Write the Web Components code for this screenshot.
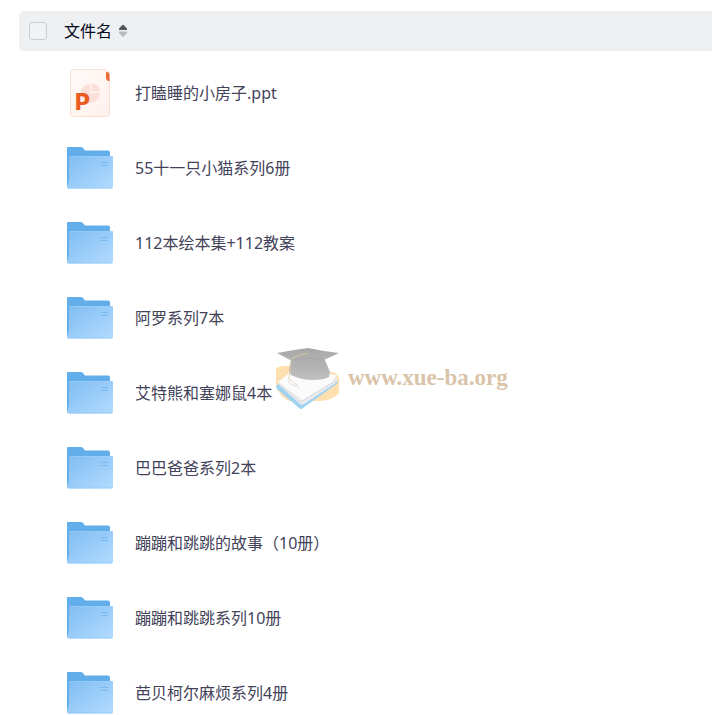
<!DOCTYPE html>
<html lang="zh-CN">
<head>
<meta charset="utf-8">
<meta name="viewport" content="width=device-width, initial-scale=1">
<title>文件名</title>
<style>
  body {
    margin: 0;
    background: #fff;
    font-family: "Noto Sans", "Noto Sans CJK SC", sans-serif;
    font-size: 16px;
    color: #424259;
  }
</style>
</head>
<body>
<file-list>
  <file-header slot="header">文件名</file-header>
  <file-row type="ppt">打瞌睡的小房子.ppt</file-row>
  <file-row>55十一只小猫系列6册</file-row>
  <file-row>112本绘本集+112教案</file-row>
  <file-row>阿罗系列7本</file-row>
  <file-row>艾特熊和塞娜鼠4本</file-row>
  <file-row>巴巴爸爸系列2本</file-row>
  <file-row>蹦蹦和跳跳的故事（10册）</file-row>
  <file-row>蹦蹦和跳跳系列10册</file-row>
  <file-row>芭贝柯尔麻烦系列4册</file-row>
  <site-watermark slot="overlay">www.xue-ba.org</site-watermark>
</file-list>

<script>
const $listTemplate = document.createElement("template");
$listTemplate.innerHTML = `
  <style>
    :host {
      display: block;
      position: relative;
      box-sizing: border-box;
      height: 100vh;
      padding: 11px 0 0 19px;
      overflow: hidden;
    }

    .rows {
      display: flex;
      flex-direction: column;
      padding-top: 4px;
    }
  </style>
  <slot name="header"></slot>
  <div class="rows" role="list"><slot></slot></div>
  <slot name="overlay"></slot>
`;

class FileList extends HTMLElement {
  constructor() {
    super();
    this.attachShadow({ mode: "open" });
    this.shadowRoot.appendChild($listTemplate.content.cloneNode(true));
  }
}

const $headerTemplate = document.createElement("template");
$headerTemplate.innerHTML = `
  <style>
    :host {
      display: flex;
      align-items: center;
      height: 40px;
      padding-left: 10px;
      border-radius: 5px 0 0 5px;
      background: #eff0f2;
      color: #03081a;
    }

    input {
      appearance: none;
      box-sizing: border-box;
      width: 18px;
      height: 18px;
      margin: 0 17px 0 0;
      border: 1px solid #cbccce;
      border-radius: 3px;
      background: #f1f2f4;
    }

    input:checked {
      background: #06a7ff;
    }

    button {
      display: flex;
      align-items: center;
      gap: 6px;
      padding: 0;
      border: 0;
      background: none;
      color: inherit;
      font: inherit;
      line-height: 24px;
      cursor: pointer;
    }
  </style>
  <input type="checkbox" aria-label="全选">
  <button type="button">
    <slot></slot>
    <svg width="10" height="16" viewBox="0 0 10 16" aria-hidden="true">
      <path d="M1 7V5.500L4 2.300Q5 1.300 6 2.300L9 5.500V7Z" fill="#555659"/>
      <path d="M1 8.500V10L4 13.300Q5 14.300 6 13.300L9 10V8.500Z" fill="#b9babd"/>
    </svg>
  </button>
`;

class FileHeader extends HTMLElement {
  constructor() {
    super();
    this.attachShadow({ mode: "open" });
    this.shadowRoot.appendChild($headerTemplate.content.cloneNode(true));
  }
}

const folderIcon = `
  <svg width="48" height="48" viewBox="0 0 48 48" aria-hidden="true">
    <defs>
      <linearGradient id="front" x1="0" y1="0" x2="1" y2="1">
        <stop offset="0" stop-color="#80bdf2"/>
        <stop offset="1" stop-color="#b2dbff"/>
      </linearGradient>
    </defs>
    <path d="M1 4Q1 3 2 3H15Q16 3 17 4L19 6.500H42Q44 6.500 44 8.500V43H2Q1 43 1 42Z" fill="#62aeeb"/>
    <path d="M4 12H46Q47 12 47 13V43Q47 44.500 45.500 44.500H2.500Q1 44.500 1 43L3 36V13Q3 12 4 12Z" fill="url(#front)"/>
    <path d="M4 12.500H46" stroke="#a5d3f9" opacity=".5"/>
    <path d="M2 44H46" stroke="#8fc9fa" opacity=".7"/>
    <path d="M35 18.500H42M35 21.500H42" stroke="#77b9f0"/>
  </svg>
`;

const pptIcon = `
  <svg width="48" height="48" viewBox="0 0 48 48" aria-hidden="true">
    <defs>
      <linearGradient id="sheet" x1="0" y1="0" x2="1" y2="1">
        <stop offset="0" stop-color="#fffaf8"/>
        <stop offset="1" stop-color="#fff1ec"/>
      </linearGradient>
    </defs>
    <path d="M6.500 .5H39L43.500 4V45Q43.500 47.500 41.500 47.500H6.500Q4.500 47.500 4.500 45.500V2.500Q4.500 .5 6.500 .5Z" fill="url(#sheet)" stroke="#fadfd5"/>
    <path d="M24 15V24H33.500A9.500 9.500 0 1 1 24 15Z" fill="#fae0d9"/>
    <path d="M25.500 14A9 9 0 0 1 34 22.500H25.500Z" fill="#fae0d9"/>
    <path d="M40 3H41.500Q43.500 3.500 43.500 6V12H42Q40 11 40 9Z" fill="#ed6a3b"/>
    <text x="9" y="41" font-family="Inter, sans-serif" font-size="23" font-weight="800" fill="#ec5b1e">P</text>
  </svg>
`;

const rowStyle = `
  <style>
    :host {
      display: flex;
      align-items: center;
      gap: 21px;
      height: 75px;
      padding-left: 47px;
    }

    svg {
      display: block;
      flex: none;
    }

    .name {
      line-height: 24px;
      white-space: nowrap;
    }
  </style>
`;

class FileRow extends HTMLElement {
  constructor() {
    super();
    this.attachShadow({ mode: "open" });
  }

  connectedCallback() {
    const icon = this.getAttribute("type") === "ppt" ? pptIcon : folderIcon;
    this.setAttribute("role", "listitem");
    this.shadowRoot.innerHTML = rowStyle + icon + `<span class="name"><slot></slot></span>`;
  }
}

const $watermarkTemplate = document.createElement("template");
$watermarkTemplate.innerHTML = `
  <style>
    /* floats over the rows, never takes clicks */
    :host {
      position: absolute;
      top: 346px;
      left: 275px;
      display: flex;
      align-items: center;
      gap: 8px;
      color: #d9c4a9;
      font: bold 23px/32px "Liberation Serif", serif;
      pointer-events: none;
    }
  </style>
  <svg width="65" height="64" viewBox="0 0 65 64" aria-hidden="true">
    <defs>
      <linearGradient id="cap" x1="0" y1="0" x2="0" y2="1">
        <stop offset="0" stop-color="#a6a6a6"/>
        <stop offset="1" stop-color="#b4b4b4"/>
      </linearGradient>
      <linearGradient id="band" x1="0" y1="0" x2="0" y2="1">
        <stop offset="0" stop-color="#acacac"/>
        <stop offset="1" stop-color="#c0c0c0"/>
      </linearGradient>
    </defs>
    <path d="M1 22Q7 19 16 20L55 26Q62 25 64 32V47Q58 54 45 55H15Q5 52 1 40Z" fill="#fddfb0"/>
    <path d="M1 40L5 36L60 33L63 37L28 62Q26 64 24 62L2 43Z" fill="#9fd3ef"/>
    <path d="M3 38L18 24L62 31V36L29 58Q26 60 24 57Z" fill="#ececee"/>
    <path d="M3 36L18 24L62 29L57 36L27 54Z" fill="#fbfbfb"/>
    <path d="M3 37L26 56L62 34" fill="none" stroke="#d8dbde"/>
    <path d="M17 12L14 24L16 29Q26 34 38 34Q49 34 54 31L55 26L49 12Z" fill="url(#band)"/>
    <path d="M2 7Q17 4 33 2Q47 5 64 7L49 14Q34 10 17 15Z" fill="url(#cap)"/>
    <path d="M17 14Q34 10 49 13" fill="none" stroke="#9f9f9f" opacity=".6"/>
    <path d="M33 7Q16 10 15 16Q16 24 14 32" fill="none" stroke="#dfcb9c" opacity=".8"/>
    <path d="M14 32Q13 38 18 39Q22 39 24 43M15 33Q18 38 23 39" fill="none" stroke="#e2ddd0"/>
  </svg>
  <span><slot></slot></span>
`;

class SiteWatermark extends HTMLElement {
  constructor() {
    super();
    this.attachShadow({ mode: "open" });
    this.shadowRoot.appendChild($watermarkTemplate.content.cloneNode(true));
  }
}

window.customElements.define("file-list", FileList);
window.customElements.define("file-header", FileHeader);
window.customElements.define("file-row", FileRow);
window.customElements.define("site-watermark", SiteWatermark);
</script>
</body>
</html>
